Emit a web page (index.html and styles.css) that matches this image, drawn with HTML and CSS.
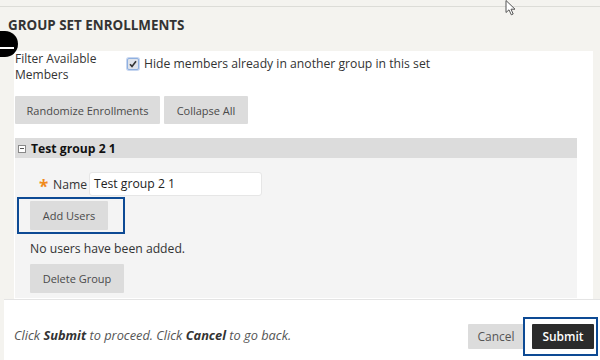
FILE: index.html
```html
<!DOCTYPE html>
<html>
<head>
<meta charset="utf-8">
<link rel="stylesheet" href="styles.css">
</head>
<body>
<div class="page">
  <div class="topline"></div>
  <h1 class="title">GROUP SET ENROLLMENTS</h1>
  <div class="collapse-dot"><span class="dash"></span></div>
  <svg class="cursor" width="14" height="16" viewBox="0 0 14 16"><path d="M1 0.5 L1 12.5 L4 9.8 L6.3 14.8 L8.2 14 L6 9.2 L10 9.2 Z" fill="#fff" stroke="#555" stroke-width="1"/></svg>
  <div class="panel">
    <div class="filter-row">
      <div class="filter-label">Filter Available<br>Members</div>
      <label class="check">
        <span class="box"><svg width="8" height="8" viewBox="0 0 8 8"><path d="M1 4.2 L3 6.4 L7 1.2" fill="none" stroke="#333" stroke-width="1.6"/></svg></span>
        <span>Hide members already in another group in this set</span>
      </label>
    </div>
    <div class="btn-row">
      <button class="btn btn-wide">Randomize Enrollments</button>
      <button class="btn btn-collapse">Collapse All</button>
    </div>
    <div class="group">
      <div class="group-head"><span class="minus-box"></span>Test group 2 1</div>
      <div class="group-body">
        <div class="name-row">
          <span class="req">*</span>
          <span class="name-label">Name</span>
          <div class="input">Test group 2 1</div>
        </div>
        <button class="btn btn-add">Add Users</button>
        <div class="none-msg">No users have been added.</div>
        <button class="btn btn-del">Delete Group</button>
      </div>
    </div>
  </div>
  <div class="footer">
    <div class="hint">Click <b>Submit</b> to proceed. Click <b>Cancel</b> to go back.</div>
    <div class="actions">
      <button class="btn btn-cancel">Cancel</button>
      <button class="btn btn-submit">Submit</button>
    </div>
  </div>
  <div class="focus focus-add"></div>
  <div class="focus focus-submit"></div>
</div>
</body>
</html>
```

FILE: styles.css
```css
html, body {
  margin: 0;
  padding: 0;
}
body {
  width: 600px;
  height: 360px;
  overflow: hidden;
  background: #f4f3ef;
  font-family: "Open Sans", "DejaVu Sans", sans-serif;
  color: #333;
}
.page {
  position: relative;
  height: 360px;
}
.topline {
  height: 6px;
  border-bottom: 1px solid #dcdcd7;
}
.title {
  margin: 0;
  padding: 8px 0 0 8px;
  height: 37px;
  box-sizing: border-box;
  font-size: 13.4px;
  line-height: 20px;
  font-weight: 700;
  color: #333;
}
.collapse-dot {
  position: absolute;
  left: -12px;
  top: 31px;
  width: 30px;
  height: 26px;
  border-radius: 13px;
  background: #000;
}
.collapse-dot .dash {
  position: absolute;
  left: 12px;
  top: 16px;
  width: 14px;
  height: 2px;
  background: #fff;
}
.cursor {
  position: absolute;
  left: 505px;
  top: 0;
}
.panel {
  margin-left: 14px;
  margin-top: 7px;
  width: 579px;
  height: 248px;
  background: #fff;
  padding-left: 1px;
  box-sizing: border-box;
}
.filter-row {
  display: flex;
  align-items: flex-start;
  font-size: 12px;
  line-height: 16px;
  color: #333;
}
.filter-label {
  width: 112px;
}
.check {
  display: flex;
  align-items: center;
  gap: 5px;
  margin-top: 5px;
  font-size: 12.2px;
  line-height: 16px;
}
.check .box {
  width: 10px;
  height: 10px;
  border: 1px solid #8fb0e0;
  background: #dfe3ea;
  border-radius: 2px;
  display: flex;
  align-items: center;
  justify-content: center;
  box-shadow: 0 0 0 1px #c6d6f0;
}
.btn {
  font-family: "Open Sans", "DejaVu Sans", sans-serif;
  font-size: 11px;
  color: #4a4a4a;
  background: #dcdcdc;
  border: none;
  border-radius: 1px;
  padding: 0;
  height: 28px;
  display: block;
}
.btn-row {
  display: flex;
  gap: 4px;
  margin-top: 13px;
}
.btn-wide { width: 145px; }
.btn-collapse { width: 84px; }
.group {
  margin-top: 14px;
  width: 562px;
  background: #f4f4f4;
}
.group-head {
  height: 20px;
  background: #dcdcdc;
  display: flex;
  align-items: center;
  font-size: 12.2px;
  font-weight: 700;
  color: #111;
  padding-left: 3px;
}
.minus-box {
  width: 6px;
  height: 6px;
  border: 1px solid #888;
  background: #fff;
  margin-right: 5px;
  margin-top: 2px;
  position: relative;
}
.minus-box::after {
  content: "";
  position: absolute;
  left: 1px;
  top: 2px;
  width: 4px;
  height: 1px;
  background: #555;
}
.group-body {
  height: 140px;
  padding: 14px 0 0 15px;
  box-sizing: border-box;
}
.name-row {
  display: flex;
  align-items: center;
  font-size: 12.2px;
  height: 24px;
}
.req {
  color: #f08a1c;
  font-size: 17px;
  font-weight: 700;
  margin-left: 9px;
  width: 14px;
  line-height: 16px;
  padding-top: 5px;
}
.name-label {
  width: 36px;
  color: #333;
}
.input {
  width: 173px;
  height: 24px;
  box-sizing: border-box;
  background: #fff;
  border: 1px solid #e6e6e6;
  border-radius: 3px;
  font-size: 12.2px;
  line-height: 22px;
  padding-left: 4px;
  color: #222;
}
.btn-add {
  margin-top: 5px;
  width: 78px;
  height: 29px;
}
.none-msg {
  font-size: 12.2px;
  line-height: 16px;
  margin-top: 11px;
  color: #333;
}
.btn-del {
  margin-top: 7px;
  width: 94px;
  height: 29px;
}
.footer {
  position: absolute;
  left: 4px;
  right: 0;
  top: 299px;
  bottom: 0;
  background: #fff;
  border-top: 1px solid #e4e4e4;
  display: flex;
  align-items: center;
  justify-content: space-between;
  padding: 0 6px 0 10px;
}
.hint {
  font-size: 12.8px;
  font-style: italic;
  color: #555;
  margin-top: 10px;
}
.hint b { color: #333; }
.actions {
  display: flex;
  gap: 8px;
  margin-top: 12px;
}
.btn-cancel {
  width: 56px;
  height: 25px;
  font-size: 12px;
  color: #555;
}
.btn-submit {
  width: 62px;
  height: 25px;
  font-size: 12px;
  background: #2b2b2b;
  color: #fff;
  font-weight: 600;
}
.focus {
  position: absolute;
  border: 2px solid #0d4a94;
  box-sizing: border-box;
}
.focus-add {
  left: 17px;
  top: 197px;
  width: 108px;
  height: 37px;
}
.focus-submit {
  left: 523px;
  top: 317px;
  width: 75px;
  height: 39px;
}
```
